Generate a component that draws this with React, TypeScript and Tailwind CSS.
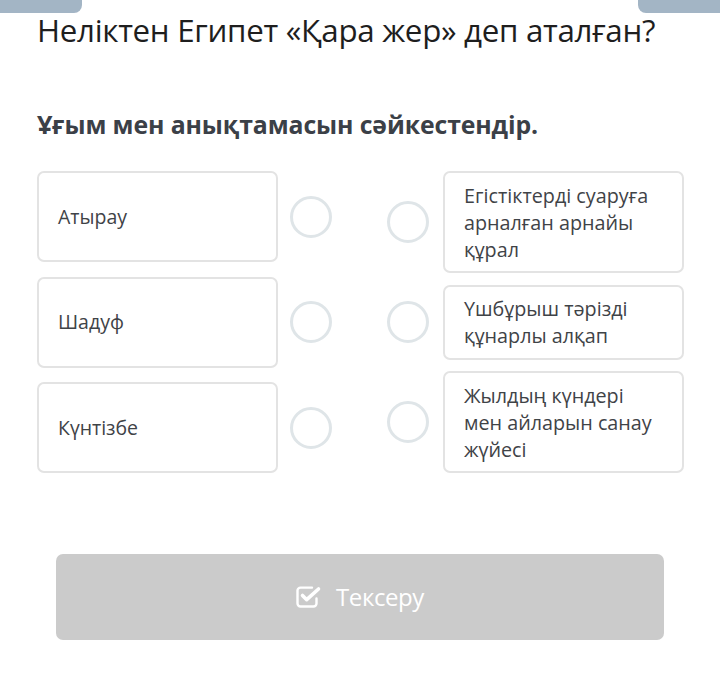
import React from 'react';

const leftItems = ['Атырау', 'Шадуф', 'Күнтізбе'];
const rightItems = [
  'Егістіктерді суаруға арналған арнайы құрал',
  'Үшбұрыш тәрізді құнарлы алқап',
  'Жылдың күндері мен айларын санау жүйесі',
];

const Dot: React.FC = () => (
  <div className="w-[42px] h-[42px] rounded-full border-[3px] border-[#dfe5e8] bg-white shrink-0" />
);

// check-square outline, check stroke runs out of the box on the top right
const CheckSquare: React.FC = () => (
  <svg width="26" height="22" viewBox="0 0 26 22" fill="none" stroke="currentColor" strokeLinecap="round" strokeLinejoin="round">
    <path d="M16 1.6H4.5a3 3 0 0 0-3 3v12.9a3 3 0 0 0 3 3h13a3 3 0 0 0 3-3v-5" strokeWidth="2.4" />
    <path d="M6.5 9.5l4.2 4.2L22.5 3" strokeWidth="3.6" />
  </svg>
);

const App: React.FC = () => {
  return (
    <div className="relative w-[720px] h-[697px] bg-white overflow-hidden font-['Open_Sans',sans-serif] text-[#3f4347]">
      {/* top tabs */}
      <div className="flex justify-between">
        <div className="w-[82px] h-[13px] bg-[#a3b5c5] rounded-br-[8px]" />
        <div className="w-[82px] h-[13px] bg-[#a3b5c5] rounded-bl-[8px]" />
      </div>

      <div className="px-[37px]">
        <h1 className="text-[31.3px] leading-[34px] text-[#1e1e1e] tracking-[-0.3px]">
          Неліктен Египет «Қара жер» деп аталған?
        </h1>

        <h2 className="mt-[63px] text-[24.8px] leading-[28px] font-bold text-[#3b4047] tracking-[-0.1px]">
          Ұғым мен анықтамасын сәйкестендір.
        </h2>

        {/* matching area */}
        <div className="mt-[33px] h-[302px] flex gap-[55px]">
          <div className="flex flex-col justify-between">
            {leftItems.map((t) => (
              <div key={t} className="flex items-center gap-[12px]">
                <div className="w-[241px] h-[91px] border-2 border-[#e3e3e3] rounded-[7px] flex items-center px-[19px] text-[19.5px]">
                  {t}
                </div>
                <Dot />
              </div>
            ))}
          </div>

          <div className="flex flex-col justify-between">
            {rightItems.map((t) => (
              <div key={t} className="flex items-center gap-[14px]">
                <Dot />
                <div className="w-[241px] border-2 border-[#e3e3e3] rounded-[7px] px-[19px] py-[8.5px] text-[19.75px] leading-[27px]">
                  {t}
                </div>
              </div>
            ))}
          </div>
        </div>
      </div>

      {/* check button */}
      <div className="mt-[81px] px-[56px]">
        <button className="w-full h-[86px] rounded-[7px] bg-[#cbcbcb] flex items-center justify-center gap-[14px] text-white text-[24px] tracking-[-0.4px]">
          <CheckSquare />
          <span>Тексеру</span>
        </button>
      </div>
    </div>
  );
};

export default App;
